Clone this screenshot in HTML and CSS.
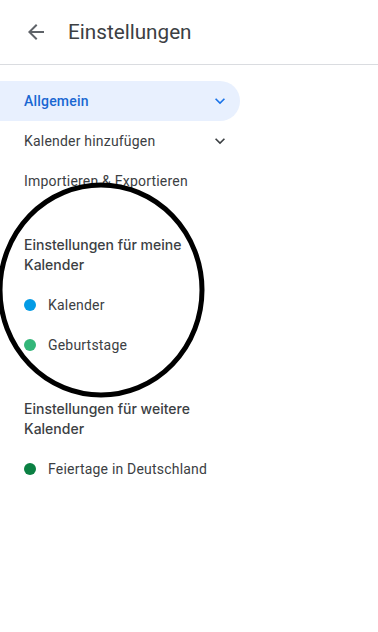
FILE: index.html
```html
<!DOCTYPE html>
<html lang="de">
<head>
<meta charset="utf-8">
<link rel="stylesheet" href="styles.css">
</head>
<body>
<header class="topbar">
  <button class="back" aria-label="Zurück">
    <svg width="24" height="24" viewBox="0 0 24 24"><path d="M20 11H7.83l5.59-5.59L12 4l-8 8 8 8 1.41-1.41L7.83 13H20v-2z" fill="#5f6368"/></svg>
  </button>
  <h1 class="title">Einstellungen</h1>
</header>
<nav class="nav">
  <div class="row active"><span>Allgemein</span>
    <svg class="chev" width="24" height="24" viewBox="0 0 24 24"><path d="M7.41 8.59 12 13.17l4.59-4.58L18 10l-6 6-6-6z" fill="currentColor"/></svg>
  </div>
  <div class="row"><span>Kalender hinzufügen</span>
    <svg class="chev" width="24" height="24" viewBox="0 0 24 24"><path d="M7.41 8.59 12 13.17l4.59-4.58L18 10l-6 6-6-6z" fill="currentColor"/></svg>
  </div>
  <div class="row"><span>Importieren &amp; Exportieren</span></div>

  <div class="section">Einstellungen für meine Kalender</div>
  <div class="row cal"><span class="dot blue"></span><span>Kalender</span></div>
  <div class="row cal"><span class="dot green"></span><span>Geburtstage</span></div>

  <div class="section">Einstellungen für weitere Kalender</div>
  <div class="row cal"><span class="dot dark"></span><span>Feiertage in Deutschland</span></div>
</nav>
<svg class="mark" width="220" height="230" viewBox="0 0 220 230"><ellipse cx="111" cy="115" rx="101" ry="105" fill="none" stroke="#000" stroke-width="5"/></svg>
</body>
</html>
```
FILE: styles.css
```css
* { box-sizing: border-box; }
html, body { margin: 0; padding: 0; background: #fff; }
body {
  font-family: Roboto, "Noto Sans", Arial, sans-serif;
  color: #3c4043;
  width: 378px;
  height: 632px;
  position: relative;
  overflow: hidden;
}
.topbar {
  height: 65px;
  display: flex;
  align-items: center;
  border-bottom: 1px solid #dadce0;
  padding-left: 24px;
}
.back {
  width: 24px; height: 24px;
  border: 0; padding: 0; background: none;
  display: flex; align-items: center; justify-content: center;
}
.title {
  margin: 0 0 0 20px;
  font-size: 20.7px;
  font-weight: 400;
  color: #3c4043;
  letter-spacing: 0;
}
.nav {
  padding-top: 16px;
  display: flex;
  flex-direction: column;
}
.row {
  height: 40px;
  width: 240px;
  display: flex;
  align-items: center;
  justify-content: space-between;
  padding: 0 10px 0 24px;
  font-size: 14px;
  letter-spacing: 0.2px;
  color: #3c4043;
}
.row.active {
  background: #e8f0fe;
  border-radius: 0 20px 20px 0;
  color: #1967d2;
  font-weight: 500;
}
.chev { color: #3c4043; width: 20px; height: 20px; }
.active .chev { color: #1a73e8; }
.section {
  margin-top: 34px;
  margin-bottom: 10px;
  padding-left: 24px;
  width: 210px;
  font-family: Inter, Roboto, sans-serif;
  font-size: 14px;
  font-weight: 500;
  line-height: 20px;
  letter-spacing: 0;
  color: #3c4043;
}
.row.cal {
  justify-content: flex-start;
  gap: 12px;
}
.dot {
  width: 12px; height: 12px;
  border-radius: 50%;
  flex: none;
}
.blue { background: #039be5; }
.green { background: #33b679; }
.dark { background: #0b8043; }
.mark {
  position: absolute;
  left: -10px;
  top: 175px;
}
```
